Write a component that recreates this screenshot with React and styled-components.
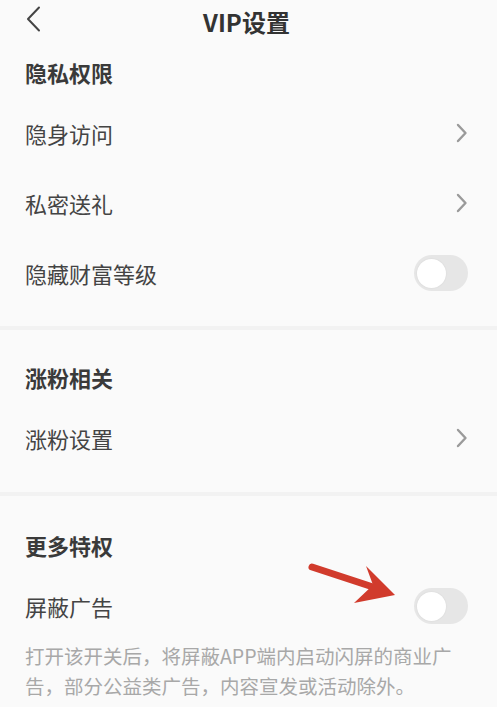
import React from 'react';
import styled, { createGlobalStyle } from 'styled-components';

const GlobalStyle = createGlobalStyle`
  html, body {
    margin: 0;
    padding: 0;
    background: #fafafa;
  }
  body {
    font-family: "Noto Sans CJK SC", "Noto Sans", sans-serif;
  }
`;

const Page = styled.div`
  position: relative;
  width: 497px;
  min-height: 707px;
  background: #fafafa;
  overflow: hidden;
`;

const Header = styled.div`
  height: 42px;
  display: flex;
  align-items: center;
  justify-content: center;
  position: relative;
`;

const BackButton = styled.div`
  position: absolute;
  left: 22px;
  top: 5px;
  width: 22px;
  height: 28px;
  display: flex;
  align-items: center;
  justify-content: center;
`;

const Title = styled.div`
  font-size: 24px;
  font-weight: 700;
  color: #333;
  margin-right: 4px;
`;

const Section = styled.div`
  padding-top: ${p => p.top}px;
  padding-bottom: ${p => p.bottom}px;
`;

const SectionTitle = styled.div`
  height: 52px;
  display: flex;
  align-items: center;
  padding-left: 25px;
  font-size: 22px;
  font-weight: 700;
  color: #3a3a3a;
`;

const Row = styled.div`
  height: 70px;
  display: flex;
  align-items: center;
  justify-content: space-between;
  padding: 0 29px 0 25px;
`;

const Label = styled.div`
  font-size: 22px;
  color: #444;
`;

const Toggle = styled.div`
  width: 54px;
  height: 36px;
  border-radius: 18px;
  background: #e6e6e6;
  display: flex;
  align-items: center;
  padding-left: 3px;
  box-sizing: border-box;
`;

const Knob = styled.div`
  width: 29px;
  height: 29px;
  border-radius: 50%;
  background: #fff;
  box-shadow: 0 0 2px rgba(0, 0, 0, 0.08);
`;

const Divider = styled.div`
  height: 4px;
  background: #f2f2f2;
`;

const Desc = styled.div`
  padding: 0 37px 0 25px;
  font-size: 19.5px;
  line-height: 30px;
  color: #a8a8a8;
`;

const ArrowMark = styled.svg`
  position: absolute;
  left: 300px;
  top: 555px;
`;

const Chevron = () => (
  <svg width="13" height="20" viewBox="0 0 13 20">
    <path d="M3 2 L10.5 10 L3 18" fill="none" stroke="#9a9a9a" strokeWidth="2.4" strokeLinecap="round" strokeLinejoin="round" />
  </svg>
);

const Switch = () => (
  <Toggle>
    <Knob />
  </Toggle>
);

export default function App() {
  return (
    <Page>
      <GlobalStyle />
      <Header>
        <BackButton>
          <svg width="18" height="26" viewBox="0 0 18 26">
            <path d="M15 1.5 L4 13 L15 24.5" fill="none" stroke="#444" strokeWidth="2" strokeLinecap="round" strokeLinejoin="round" />
          </svg>
        </BackButton>
        <Title>VIP设置</Title>
      </Header>

      <Section top={4} bottom={18}>
        <SectionTitle>隐私权限</SectionTitle>
        <Row>
          <Label>隐身访问</Label>
          <Chevron />
        </Row>
        <Row>
          <Label>私密送礼</Label>
          <Chevron />
        </Row>
        <Row>
          <Label>隐藏财富等级</Label>
          <Switch />
        </Row>
      </Section>
      <Divider />

      <Section top={21} bottom={19}>
        <SectionTitle>涨粉相关</SectionTitle>
        <Row>
          <Label>涨粉设置</Label>
          <Chevron />
        </Row>
      </Section>
      <Divider />

      <Section top={23} bottom={10}>
        <SectionTitle>更多特权</SectionTitle>
        <Row>
          <Label>屏蔽广告</Label>
          <Switch />
        </Row>
        <Desc>打开该开关后，将屏蔽APP端内启动闪屏的商业广告，部分公益类广告，内容宣发或活动除外。</Desc>
      </Section>

      <ArrowMark width="110" height="60" viewBox="0 0 110 60">
        <path d="M12 12 L76 33" stroke="#d13b2c" strokeWidth="7" strokeLinecap="round" />
        <polygon points="95,40 66,11 73,30 54,48" fill="#d13b2c" />
      </ArrowMark>
    </Page>
  );
}
